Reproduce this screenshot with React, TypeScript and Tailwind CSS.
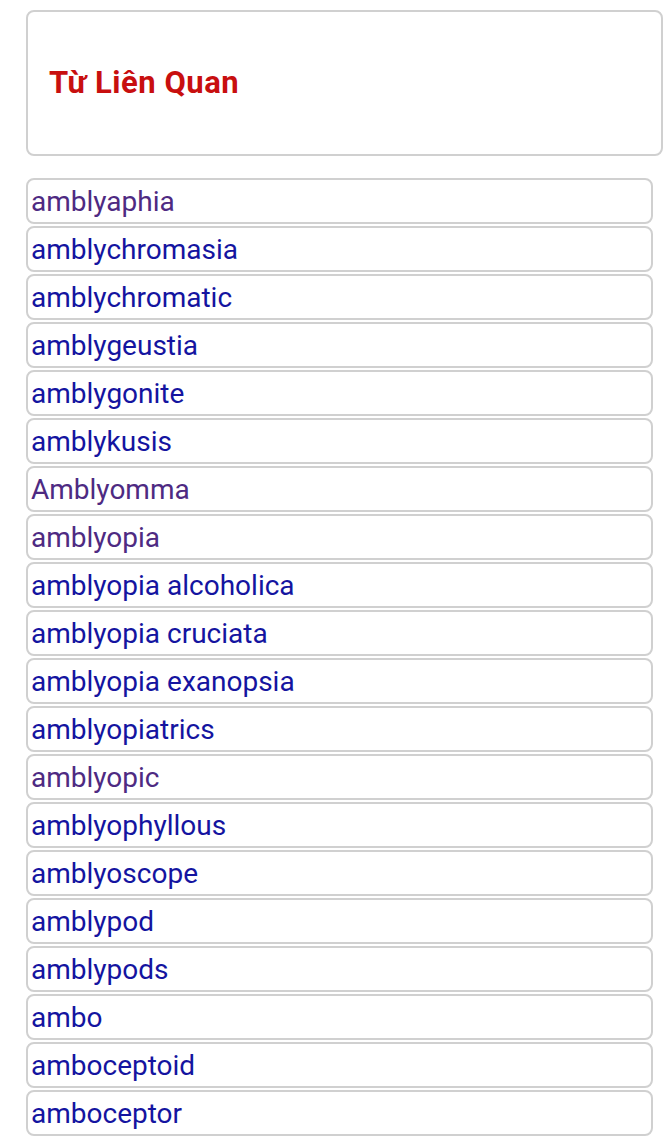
const words: { text: string; visited?: boolean }[] = [
  { text: "amblyaphia", visited: true },
  { text: "amblychromasia" },
  { text: "amblychromatic" },
  { text: "amblygeustia" },
  { text: "amblygonite" },
  { text: "amblykusis" },
  { text: "Amblyomma", visited: true },
  { text: "amblyopia", visited: true },
  { text: "amblyopia alcoholica" },
  { text: "amblyopia cruciata" },
  { text: "amblyopia exanopsia" },
  { text: "amblyopiatrics" },
  { text: "amblyopic", visited: true },
  { text: "amblyophyllous" },
  { text: "amblyoscope" },
  { text: "amblypod" },
  { text: "amblypods" },
  { text: "ambo" },
  { text: "amboceptoid" },
  { text: "amboceptor" },
]

function App() {
  return (
    <div
      className="min-h-[1142px] bg-white pt-[10px]"
      style={{ fontFamily: "Roboto, 'Noto Sans', sans-serif" }}
    >
      <div className="ml-[26px] mr-[6px] h-[146px] rounded-[8px] border-2 border-[#d0d0d0] flex items-center pl-[21px]">
        <h2 className="text-[31px] font-bold text-[#c80f0f] leading-none tracking-[0.5px] pb-[2px]">Từ Liên Quan</h2>
      </div>

      <ul className="mt-[22px] ml-[26px] mr-[16px] flex flex-col gap-[2px]">
        {words.map((w) => (
          <li
            key={w.text}
            className="h-[46px] rounded-[8px] border-2 border-[#d0d0d0] flex items-center pl-[3px]"
          >
            <a
              href="#"
              className={
                "text-[28px] leading-none pt-[1px] " +
                (w.visited ? "text-[#4e2a82]" : "text-[#1414a0]")
              }
            >
              {w.text}
            </a>
          </li>
        ))}
      </ul>
    </div>
  )
}

export default App
